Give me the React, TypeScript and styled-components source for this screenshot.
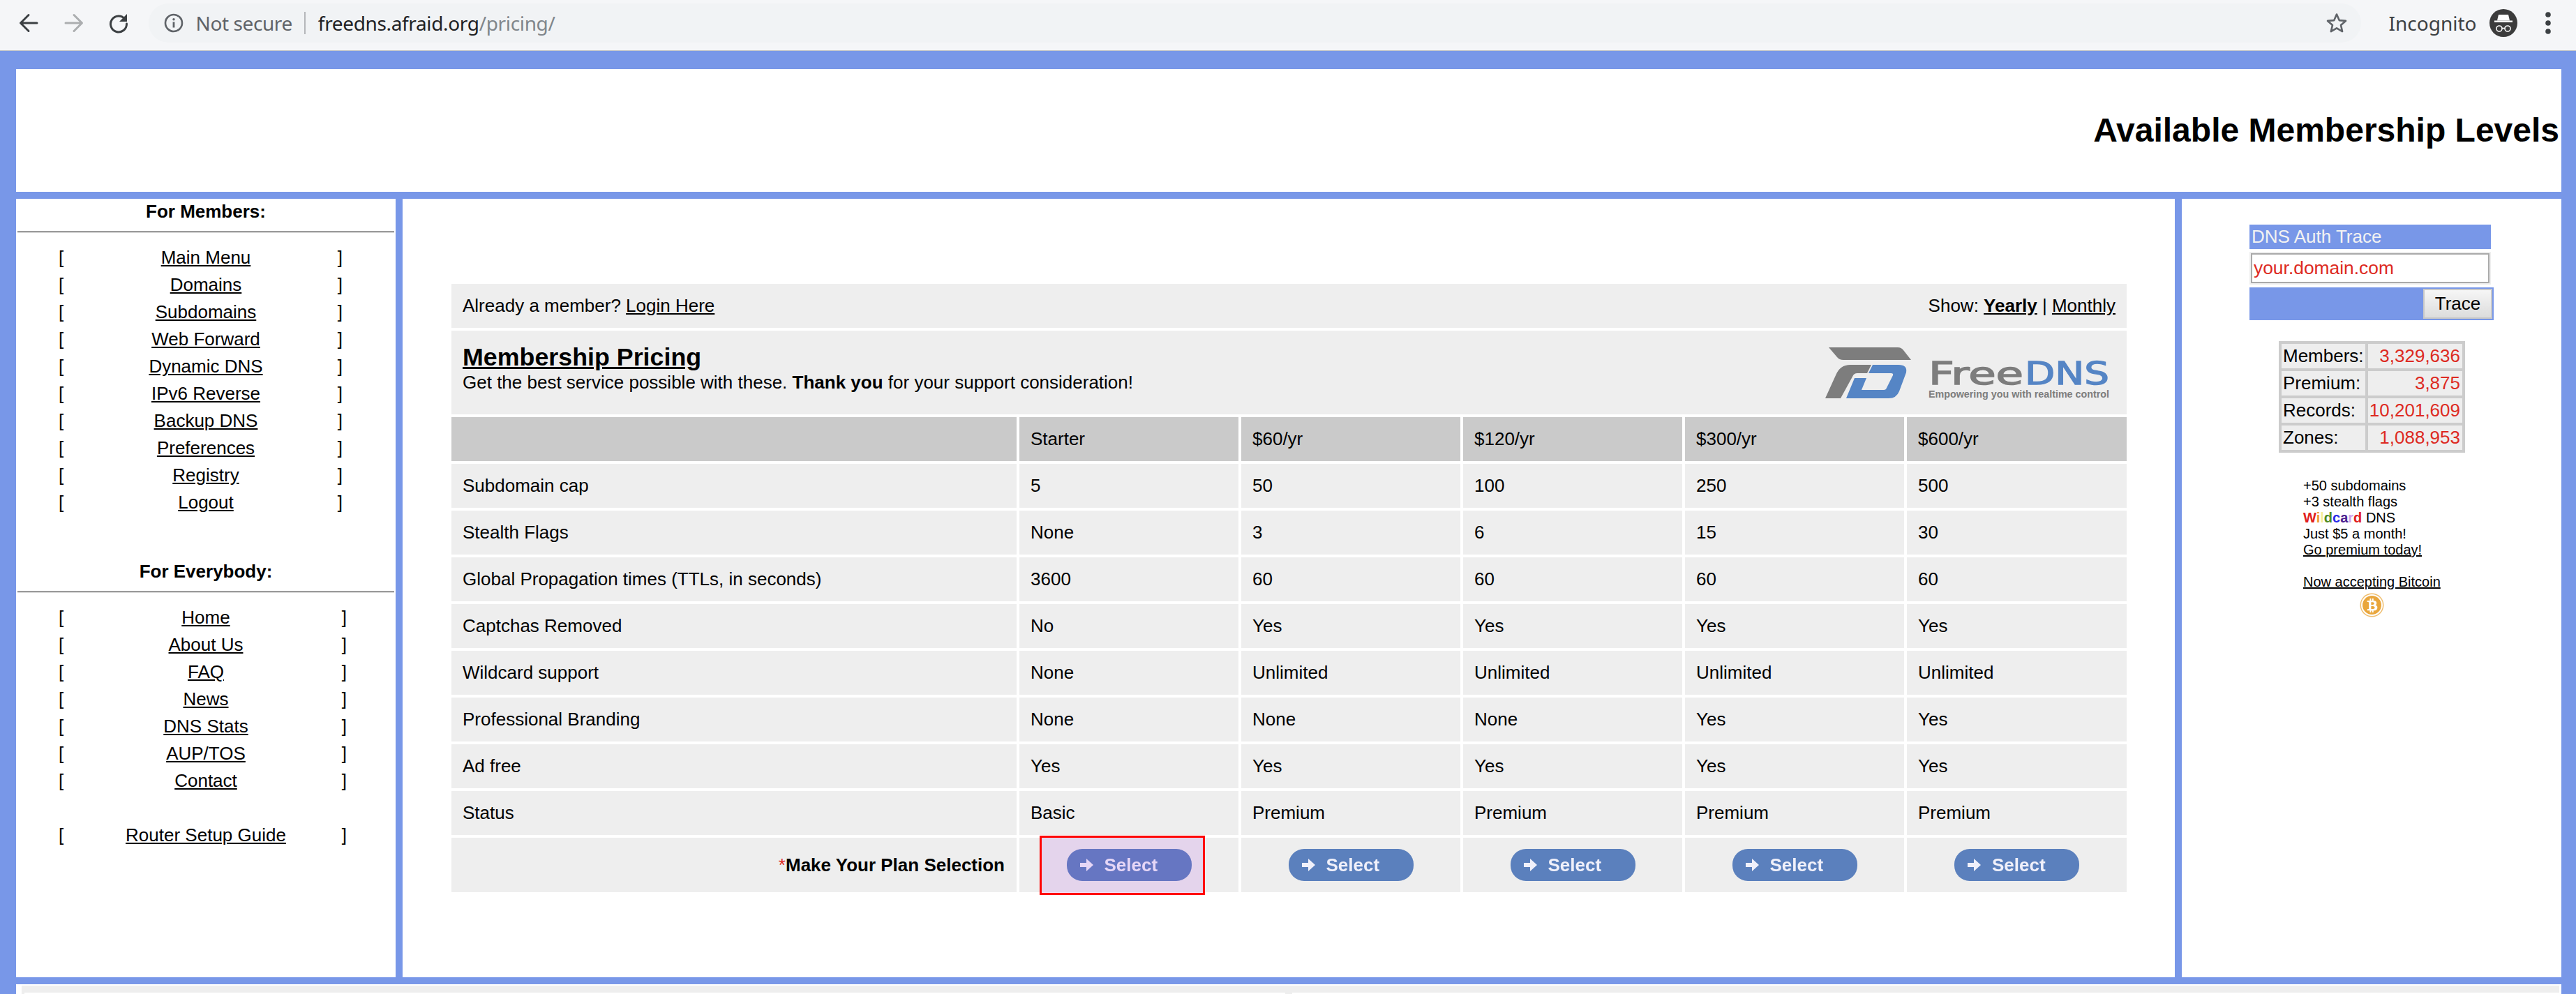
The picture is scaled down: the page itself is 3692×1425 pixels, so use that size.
import React from "react";
import styled, { createGlobalStyle } from "styled-components";
import { FaBtc } from "react-icons/fa";

const BLUE = "#7897e8";
const RED = "#dd2a22";

const Global = createGlobalStyle`
  html, body { margin: 0; padding: 0; height: 1425px; overflow: hidden; background: ${BLUE}; }
  body { font-family: "Liberation Sans", Arial, sans-serif; font-size: 26px; color: #000; }
  * { box-sizing: border-box; }
  a { color: #000; text-decoration: underline; }
`;

/* ---------- browser toolbar ---------- */
const Toolbar = styled.header`
  height: 73px;
  padding: 0 0 6px 9px;
  display: flex;
  align-items: center;
  background: #f5f6f8;
  border-bottom: 1px solid #c4c5c7;
  font-family: "Noto Sans", sans-serif;
`;
const NavButton = styled.div`
  width: 64.5px;
  height: 50px;
  display: flex;
  align-items: center;
  justify-content: center;
`;
const Omnibox = styled.div`
  margin-left: 10px;
  width: 3171px;
  height: 56px;
  border-radius: 28px;
  background: #f1f3f5;
  display: flex;
  align-items: center;
  padding: 0 20px 0 22px;
`;
const SecurityLabel = styled.span`
  margin-left: 18px;
  color: #5f6368;
  font-size: 28px;
  letter-spacing: -0.4px;
`;
const Divider = styled.span`
  width: 2px;
  height: 32px;
  margin: 0 18px 0 17px;
  background: #b5b7ba;
`;
const Url = styled.span`
  flex: 1;
  font-size: 28px;
  letter-spacing: -0.35px;
  color: #202124;
`;
const UrlPath = styled.span`
  color: #80868b;
`;
const ProfileLabel = styled.span`
  margin-left: 40px;
  font-size: 28px;
  color: #3c4043;
  white-space: nowrap;
`;
const ProfileIcon = styled.svg`
  margin-left: 19px;
  flex: none;
`;
const Kebab = styled.svg`
  margin-left: 38px;
  flex: none;
`;

/* ---------- page frame ---------- */
const Page = styled.div`
  padding: 26px 21px 0 23px;
`;
const Banner = styled.div`
  height: 176px;
  background: #fff;
  display: flex;
  align-items: center;
  justify-content: flex-end;
  padding-right: 3px;
`;
const BannerTitle = styled.h1`
  margin: 0;
  font-size: 48px;
  font-weight: 700;
  line-height: 1;
`;
const Columns = styled.div`
  margin-top: 10px;
  height: 1116px;
  display: grid;
  grid-template-columns: 544px 2540px 544px;
  gap: 10px;
`;

/* ---------- left navigation ---------- */
const Sidebar = styled.nav`
  background: #fff;
  padding-top: 3px;
`;
const SideTitle = styled.div<{ $top?: number }>`
  margin-top: ${(p) => p.$top ?? 0}px;
  height: 30px;
  line-height: 30px;
  text-align: center;
  font-weight: 700;
`;
const SideRule = styled.hr`
  margin: 13px 2px 16px;
  height: 3px;
  border: 0;
  border-top: 2px solid #9a9a9a;
  border-bottom: 1px solid #dedede;
`;
const MenuRow = styled.div<{ $end: number; $gap?: boolean }>`
  height: 39px;
  margin-top: ${(p) => (p.$gap ? 39 : 0)}px;
  line-height: 39px;
  padding-left: 61px;
  display: grid;
  grid-template-columns: 81px 260px ${(p) => p.$end}px;
  text-align: center;
  white-space: nowrap;
`;
const BracketOpen = styled.span`
  text-align: left;
`;
const BracketClose = styled.span`
  text-align: right;
`;

/* ---------- main pricing ---------- */
const Main = styled.main`
  background: #fff;
  padding: 122px 0 0 70px;
`;
const PriceGrid = styled.div`
  width: 2401px;
  display: grid;
  grid-template-columns: 810px repeat(4, 314px) 315px;
  gap: 4px;
`;
const TopBar = styled.div`
  grid-column: 1 / -1;
  height: 63px;
  background: #eee;
  padding: 0 16px;
  display: flex;
  align-items: center;
  justify-content: space-between;
`;
const LogoBar = styled.div`
  grid-column: 1 / -1;
  height: 120px;
  background: #eee;
  padding: 20px 0 0 16px;
  display: flex;
  justify-content: space-between;
`;
const PricingTitle = styled.a`
  display: block;
  font-size: 35.8px;
  font-weight: 700;
  line-height: 36px;
`;
const PricingSub = styled.div`
  line-height: 36px;
  white-space: nowrap;
`;
const Logo = styled.svg`
  margin: 4px 22px 0 0;
  flex: none;
`;
const HeadCell = styled.div`
  height: 63px;
  background: #cacaca;
  padding: 0 16px;
  display: flex;
  align-items: center;
`;
const Cell = styled.div`
  height: 63px;
  background: #eee;
  padding: 0 16px;
  display: flex;
  align-items: center;
`;
const PlanLabel = styled.div`
  height: 78px;
  background: #eee;
  padding-right: 17px;
  display: flex;
  align-items: center;
  justify-content: flex-end;
  font-weight: 700;
`;
const Asterisk = styled.span`
  color: ${RED};
  font-weight: 400;
`;
const PlanCell = styled.div`
  height: 78px;
  background: #eee;
  position: relative;
  display: flex;
  align-items: center;
  justify-content: center;
`;
const SelectButton = styled.div`
  width: 179px;
  height: 46px;
  border-radius: 22px;
  background: #5b80bd;
  color: #f0f0fa;
  padding-left: 19px;
  display: flex;
  align-items: center;
  gap: 16px;
  font-weight: 700;
  font-size: 26px;
  filter: blur(0.6px);
`;
const Highlight = styled.div`
  position: absolute;
  left: 29px;
  top: -3px;
  width: 237px;
  height: 85px;
  border: 3px solid #ff0000;
  background: rgba(168, 56, 224, 0.14);
`;

/* ---------- right column ---------- */
const Aside = styled.aside`
  background: #fff;
  padding: 37px 0 0 97px;
`;
const TraceTitle = styled.div`
  width: 346px;
  height: 35px;
  line-height: 35px;
  padding-left: 3px;
  background: ${BLUE};
  color: #f2f2f2;
`;
const TraceInput = styled.input`
  display: block;
  width: 342px;
  height: 43px;
  margin: 6px 2px;
  padding: 0 2px;
  background: #fff;
  border: 2px solid #aaa;
  box-shadow: 0 0 0 2px #eee;
  outline: none;
  color: ${RED};
  font: inherit;
  font-size: 26.4px;
`;
const TraceActions = styled.div`
  width: 350px;
  height: 47px;
  background: ${BLUE};
  padding: 2px;
  display: flex;
  justify-content: flex-end;
`;
const TraceButton = styled.button`
  width: 99px;
  height: 43px;
  padding: 0;
  border: 2px solid #c8c8c8;
  background: linear-gradient(#f6f6f6, #dcdcdc);
  color: #000;
  font: inherit;
`;
const Stats = styled.div`
  margin: 30px 0 0 42px;
  width: 267px;
  padding: 4px;
  background: #ccc;
  display: grid;
  grid-template-columns: 120px 135px;
  gap: 4px;
`;
const StatLabel = styled.div`
  height: 35px;
  line-height: 35px;
  padding-left: 2px;
  background: #eee;
`;
const StatValue = styled.div`
  height: 35px;
  line-height: 35px;
  padding-right: 3px;
  text-align: right;
  background: #eee;
  color: ${RED};
`;
const Promo = styled.div`
  margin: 36px 0 0 77px;
  width: 197px;
  font-size: 20px;
  line-height: 23px;
  white-space: nowrap;
`;
const Rainbow = styled.b<{ $c: string }>`
  color: ${(p) => p.$c};
`;
const Spacer = styled.div`
  height: 23px;
`;
const Coin = styled.div`
  margin: 8px auto 0;
  width: 27px;
  height: 27px;
  border-radius: 50%;
  background: #e9a63c;
  box-shadow: 0 0 0 2px #fff, 0 0 0 3.5px #efbd6e;
  color: #fff;
  display: flex;
  align-items: center;
  justify-content: center;
`;

/* ---------- footer ---------- */
const Footer = styled.footer`
  margin-top: 10px;
  height: 14px;
  background: #fff;
  padding: 2px 3px 0 8px;
`;
const FooterBand = styled.div`
  height: 12px;
  background: #eee;
  padding: 10px 0 0 4px;
  display: grid;
  grid-template-columns: 1807px 10px 1fr;
`;
const FooterCellEnd = styled.div`
  background: #fff;
`;

const members = ["Main Menu", "Domains", "Subdomains", "Web Forward", "Dynamic DNS", "IPv6 Reverse", "Backup DNS", "Preferences", "Registry", "Logout"];
const everybody = ["Home", "About Us", "FAQ", "News", "DNS Stats", "AUP/TOS", "Contact"];
const heads = ["", "Starter", "$60/yr", "$120/yr", "$300/yr", "$600/yr"];
const rows = [
  ["Subdomain cap", "5", "50", "100", "250", "500"],
  ["Stealth Flags", "None", "3", "6", "15", "30"],
  ["Global Propagation times (TTLs, in seconds)", "3600", "60", "60", "60", "60"],
  ["Captchas Removed", "No", "Yes", "Yes", "Yes", "Yes"],
  ["Wildcard support", "None", "Unlimited", "Unlimited", "Unlimited", "Unlimited"],
  ["Professional Branding", "None", "None", "None", "Yes", "Yes"],
  ["Ad free", "Yes", "Yes", "Yes", "Yes", "Yes"],
  ["Status", "Basic", "Premium", "Premium", "Premium", "Premium"],
];
const stats = [
  ["Members:", "3,329,636"],
  ["Premium:", "3,875"],
  ["Records:", "10,201,609"],
  ["Zones:", "1,088,953"],
];
const wild: [string, string][] = [
  ["W", "#e02020"], ["i", "#ef9a2e"], ["l", "#f6ec9a"], ["d", "#4f8a1f"],
  ["c", "#2a2ae8"], ["a", "#4b1f90"], ["r", "#cfa0ea"], ["d", "#e02020"],
];

const Menu = ({ items, end }: { items: string[]; end: number }) => (
  <>
    {items.map((m) => (
      <MenuRow key={m} $end={end}>
        <BracketOpen>[</BracketOpen>
        <a>{m}</a>
        <BracketClose>]</BracketClose>
      </MenuRow>
    ))}
  </>
);

const Select = () => (
  <SelectButton>
    <svg width="19" height="18" viewBox="0 0 19 18">
      <path d="M0 6h9V0l10 9-10 9v-6H0z" fill="currentColor" />
    </svg>
    Select
  </SelectButton>
);

export default function App() {
  return (
    <>
      <Global />
      <Toolbar>
        <NavButton>
          <svg width="30" height="30" viewBox="0 0 30 30" fill="none" stroke="#3c4043" strokeWidth="3" strokeLinecap="round" strokeLinejoin="round">
            <path d="M27 15H4M15 3.5 3.5 15 15 26.5" />
          </svg>
        </NavButton>
        <NavButton>
          <svg width="30" height="30" viewBox="0 0 30 30" fill="none" stroke="#acaeb0" strokeWidth="3" strokeLinecap="round" strokeLinejoin="round">
            <path d="M3 15h23M15 3.5 26.5 15 15 26.5" />
          </svg>
        </NavButton>
        <NavButton>
          <svg width="30" height="30" viewBox="0 0 30 30" fill="none">
            <path d="M24.2 9.5A11.5 11.5 0 1 0 26.5 16" stroke="#3c4043" strokeWidth="3" strokeLinecap="round" />
            <path d="M27 2v11H16z" fill="#3c4043" />
          </svg>
        </NavButton>
        <Omnibox>
          <svg width="28" height="28" viewBox="0 0 28 28" fill="none">
            <circle cx="14" cy="14" r="12" stroke="#5f6368" strokeWidth="2.6" />
            <path d="M14 12.5v8" stroke="#5f6368" strokeWidth="2.8" />
            <circle cx="14" cy="8.8" r="1.7" fill="#5f6368" />
          </svg>
          <SecurityLabel>Not secure</SecurityLabel>
          <Divider />
          <Url>
            freedns.afraid.org<UrlPath>/pricing/</UrlPath>
          </Url>
          <svg width="30" height="30" viewBox="0 0 30 30" fill="none">
            <path d="M15 2.5l3.7 8.6 9.3.8-7 6.1 2.1 9.1-8.1-4.8-8.1 4.8 2.1-9.1-7-6.1 9.3-.8z" stroke="#5f6368" strokeWidth="2.6" strokeLinejoin="round" />
          </svg>
        </Omnibox>
        <ProfileLabel>Incognito</ProfileLabel>
        <ProfileIcon width="40" height="40" viewBox="0 0 40 40">
          <circle cx="20" cy="20" r="20" fill="#3c3c3c" />
          <path d="M13 8h14l2 8.5H11z" fill="#fff" />
          <rect x="7" y="16.5" width="26" height="2.5" fill="#fff" />
          <circle cx="14" cy="28" r="4" fill="none" stroke="#fff" strokeWidth="1.6" />
          <circle cx="26" cy="28" r="4" fill="none" stroke="#fff" strokeWidth="1.6" />
          <path d="M18 27.5h4" stroke="#fff" strokeWidth="1.6" />
        </ProfileIcon>
        <Kebab width="12" height="36" viewBox="0 0 12 36" fill="#3c4043">
          <circle cx="6" cy="6" r="3.8" />
          <circle cx="6" cy="18" r="3.8" />
          <circle cx="6" cy="30" r="3.8" />
        </Kebab>
      </Toolbar>

      <Page>
        <Banner>
          <BannerTitle>Available Membership Levels</BannerTitle>
        </Banner>
        <Columns>
          <Sidebar>
            <SideTitle>For Members:</SideTitle>
            <SideRule />
            <Menu items={members} end={66} />
            <SideTitle $top={64}>For Everybody:</SideTitle>
            <SideRule />
            <Menu items={everybody} end={72} />
            <MenuRow $end={72} $gap>
              <BracketOpen>[</BracketOpen>
              <a>Router Setup Guide</a>
              <BracketClose>]</BracketClose>
            </MenuRow>
          </Sidebar>

          <Main>
            <PriceGrid>
              <TopBar>
                <span>
                  Already a member? <a>Login Here</a>
                </span>
                <span>
                  Show: <a><b>Yearly</b></a> | <a>Monthly</a>
                </span>
              </TopBar>
              <LogoBar>
                <div>
                  <PricingTitle>Membership Pricing</PricingTitle>
                  <PricingSub>
                    Get the best service possible with these. <b>Thank you</b> for your support consideration!
                  </PricingSub>
                </div>
                <Logo width="410" height="76" viewBox="0 0 410 76">
                  <path d="M5 0H104Q109 0 112 4L123 18H26Q20 18 17 14Z" fill="#7d7d7d" />
                  <path d="M0 73 15 40Q21 25 36 25H66L60 37H46Q41 37 39 42L22 73Z" fill="#7d7d7d" />
                  <path d="M68 25H105Q118 25 116 36L106 63Q102 73 91 73H30L42 44H59L52 61H84Q87 61 88 58L97 40Q98 37 94 37H62Z" fill="#5585c5" />
                  <text x="148" y="53" fontFamily="DejaVu Sans, sans-serif" fontSize="45" textLength="136" lengthAdjust="spacingAndGlyphs" fill="#7d7d7d" stroke="#7d7d7d" strokeWidth="1.4">Free</text>
                  <text x="286" y="53" fontFamily="DejaVu Sans, sans-serif" fontSize="45" textLength="121" lengthAdjust="spacingAndGlyphs" fill="#5585c5" stroke="#5585c5" strokeWidth="1.4">DNS</text>
                  <text x="148" y="72" fontFamily="Liberation Sans, sans-serif" fontWeight="700" fontSize="14" textLength="259" lengthAdjust="spacingAndGlyphs" fill="#7d7d7d">Empowering you with realtime control</text>
                </Logo>
              </LogoBar>
              {heads.map((h, i) => (
                <HeadCell key={i}>{h}</HeadCell>
              ))}
              {rows.map((r) => r.map((c, i) => <Cell key={r[0] + i}>{c}</Cell>))}
              <PlanLabel>
                <span>
                  <Asterisk>*</Asterisk>Make Your Plan Selection
                </span>
              </PlanLabel>
              {[0, 1, 2, 3, 4].map((i) => (
                <PlanCell key={i}>
                  <Select />
                  {i === 0 && <Highlight />}
                </PlanCell>
              ))}
            </PriceGrid>
          </Main>

          <Aside>
            <TraceTitle>DNS Auth Trace</TraceTitle>
            <TraceInput readOnly value="your.domain.com" />
            <TraceActions>
              <TraceButton>Trace</TraceButton>
            </TraceActions>
            <Stats>
              {stats.map(([k, v]) => (
                <React.Fragment key={k}>
                  <StatLabel>{k}</StatLabel>
                  <StatValue>{v}</StatValue>
                </React.Fragment>
              ))}
            </Stats>
            <Promo>
              <div>+50 subdomains</div>
              <div>+3 stealth flags</div>
              <div>
                {wild.map(([l, c], i) => (
                  <Rainbow key={i} $c={c}>{l}</Rainbow>
                ))}{" "}
                DNS
              </div>
              <div>Just $5 a month!</div>
              <a>Go premium today!</a>
              <Spacer />
              <a>Now accepting Bitcoin</a>
              <Coin>
                <FaBtc size={20} />
              </Coin>
            </Promo>
          </Aside>
        </Columns>
        <Footer>
          <FooterBand>
            <FooterCellEnd />
            <div />
            <FooterCellEnd />
          </FooterBand>
        </Footer>
      </Page>
    </>
  );
}
